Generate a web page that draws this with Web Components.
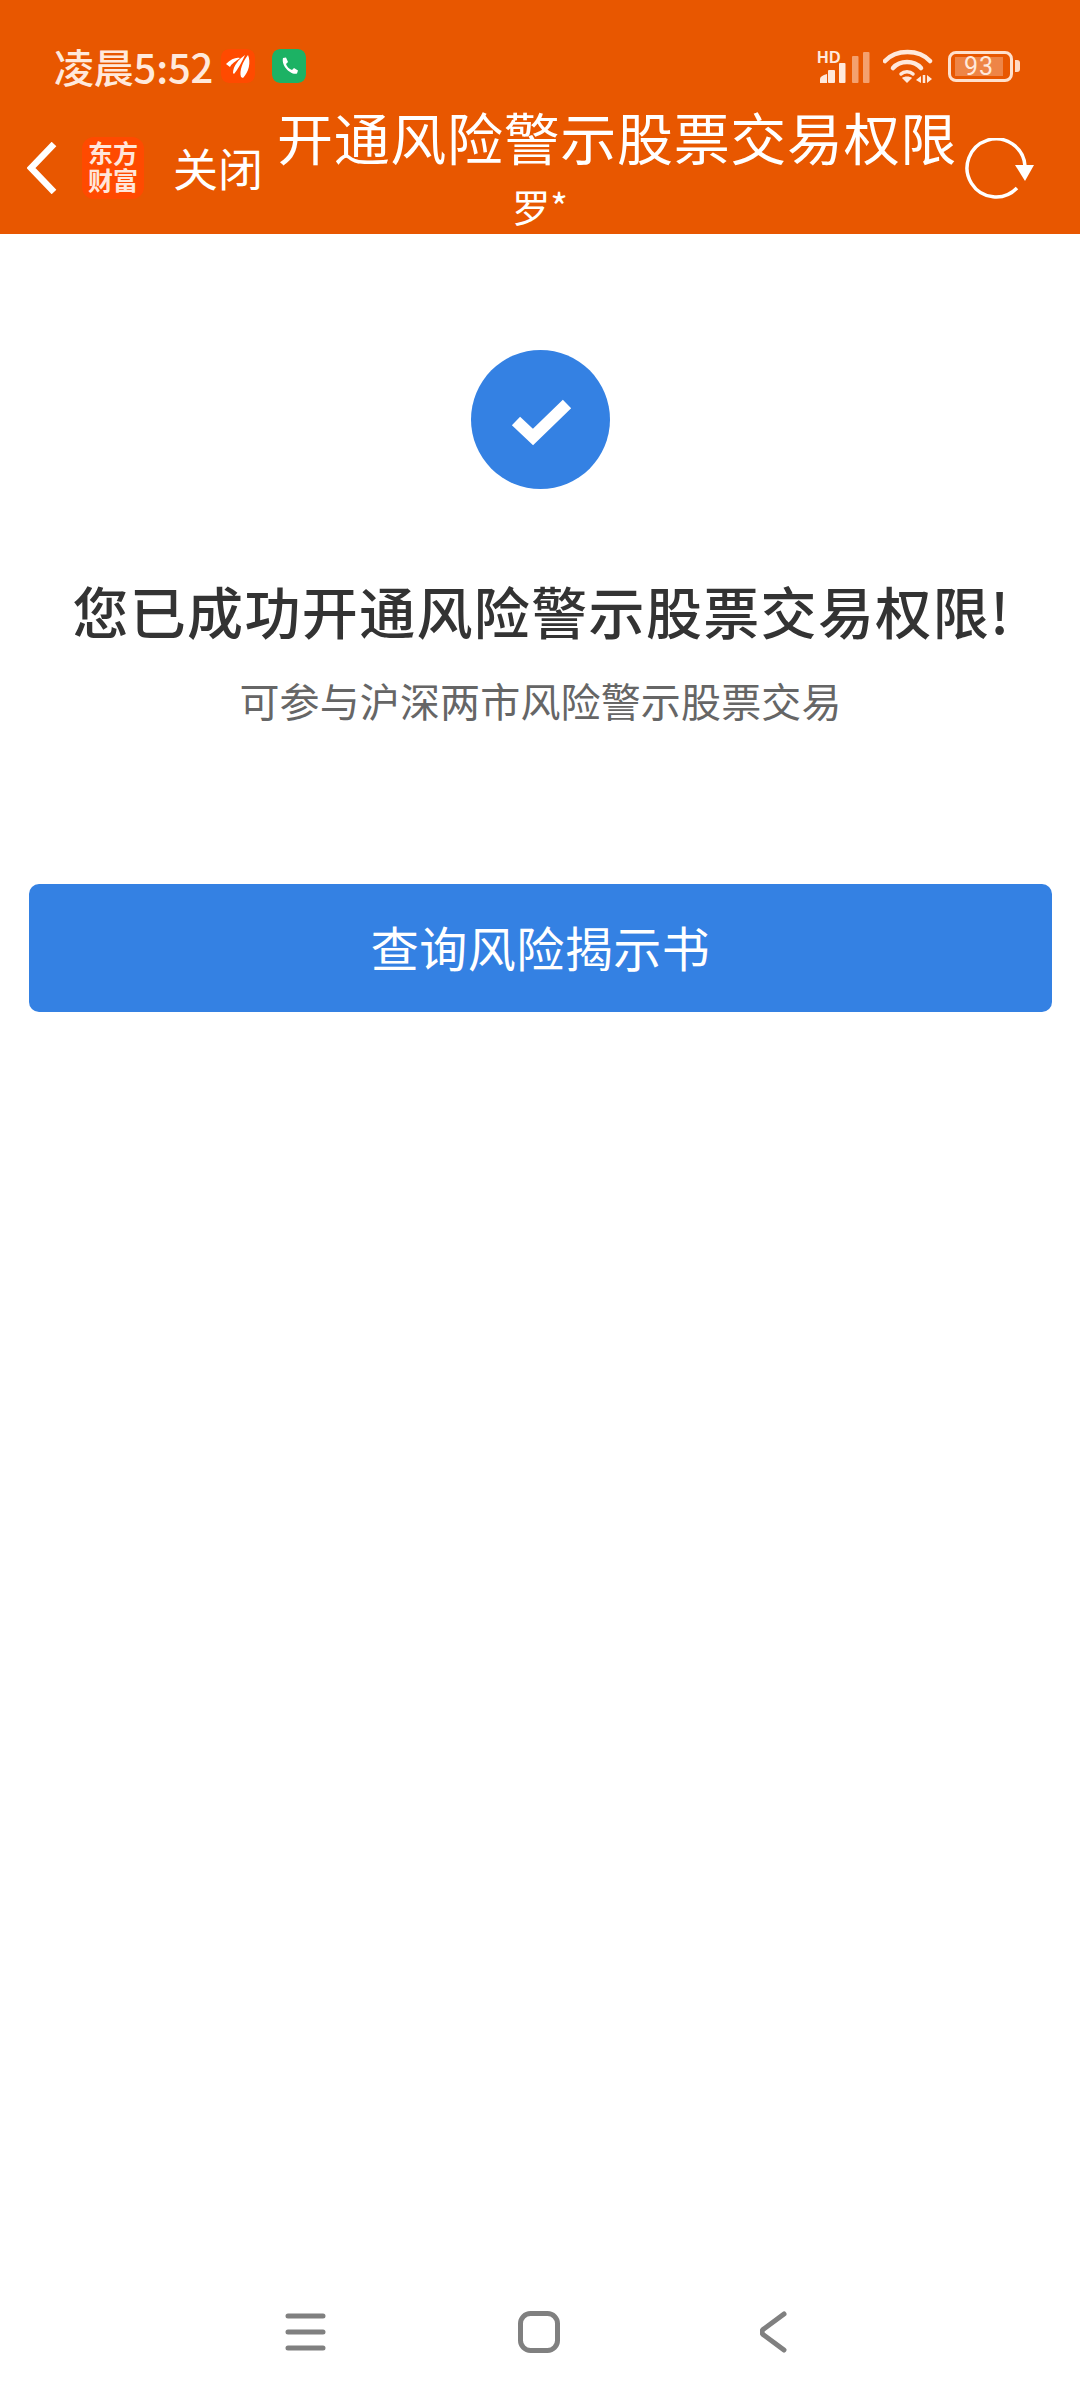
<!DOCTYPE html>
<html lang="zh">
<head>
<meta charset="utf-8">
<title>开通风险警示股票交易权限</title>
<style>
  html, body { margin: 0; padding: 0; background: #fff; }
  body {
    width: 1080px;
    height: 2400px;
    display: flex;
    flex-direction: column;
    font-family: "Noto Sans CJK SC", "Noto Sans", sans-serif;
  }
  result-panel { flex: 1; }
</style>
</head>
<body>
<status-bar time="凌晨5:52" battery="93"></status-bar>
<app-toolbar heading="开通风险警示股票交易权限" user="罗*" close-label="关闭"></app-toolbar>
<result-panel>
  <span slot="heading">您已成功开通风险警示股票交易权限!</span>
  <span slot="detail">可参与沪深两市风险警示股票交易</span>
  <action-button>查询风险揭示书</action-button>
</result-panel>
<nav-bar></nav-bar>

<script>
// status-bar - clock, notification icons, signal, wifi and battery
class StatusBar extends HTMLElement {
  constructor() {
    super();
    this.attachShadow({ mode: 'open' });
  }

  connectedCallback() {
    const time = this.getAttribute('time');
    const battery = this.getAttribute('battery');
    this.shadowRoot.innerHTML = `
      <style>
        :host {
          display: flex;
          align-items: center;
          height: 34px;
          padding: 49px 60px 13px 54px;
          background: #e85700;
          color: #ffe9dc;
        }
        .time { font-size: 40px; font-weight: 500; line-height: 34px; white-space: nowrap; width: 167px; letter-spacing: -0.2px; }
        .app { width: 34px; height: 34px; border-radius: 8px; display: block; }
        .app + .app { margin-left: 17px; }
        .spacer { flex: 1; }
        .signal { position: relative; width: 56px; height: 34px; margin-right: 10px; }
        .hd {
          position: absolute; left: 0; top: 2px;
          font: 700 16px/13px "Liberation Sans", sans-serif;
          letter-spacing: 0.5px;
        }
        svg { display: block; }
        .battery {
          box-sizing: border-box;
          display: flex;
          align-items: center;
          justify-content: center;
          width: 65px;
          height: 31px;
          margin-left: 15px;
          padding: 3px 7px 3px 4px;
          border: 3px solid #ffe0cc;
          border-radius: 8px;
        }
        .level {
          flex: 1;
          height: 100%;
          background: rgba(255, 255, 255, 0.28);
          text-align: center;
          font: 400 25px/19px "Roboto", sans-serif;
          letter-spacing: 1px;
        }
        .tip { width: 5px; height: 12px; margin-left: 2px; border-radius: 0 3px 3px 0; background: #ffd9c2; }
      </style>
      <span class="time">${time}</span>
      <svg class="app" viewBox="0 0 34 34">
        <rect width="34" height="34" rx="8" fill="#ff4a00"/>
        <path d="M5 15 C10 10 15 8 19 9 C15 12 10 15 9 18 Z M12 24 C12 17 18 10 24 6 C21 13 17 20 13 25 Z M20 28 C18 22 22 12 27 6 C30 13 28 23 22 29 Z" fill="#fff"/>
      </svg>
      <svg class="app" viewBox="0 0 34 34">
        <rect width="34" height="34" rx="8" fill="#1cb264"/>
        <path d="M11 9 L14 8.5 L16 13 L14 15 C15 18 17 20 20 21 L22 19 L26 21.5 L25 24.5 C19 26.5 9 17 11 9 Z" fill="#fff"/>
      </svg>
      <span class="spacer"></span>
      <span class="signal">
        <span class="hd">HD</span>
        <svg width="56" height="34" viewBox="0 0 56 34" fill="#ffe9dc">
          <path d="M3 34 V30 Q3 27 10 25 V34 Z"/>
          <rect x="11" y="21" width="7" height="13" rx="1"/>
          <rect x="22" y="14" width="6.5" height="20" rx="1"/>
          <rect x="35" y="7" width="6.5" height="27" rx="1" opacity=".5"/>
          <rect x="46" y="3" width="6.5" height="31" rx="1" opacity=".5"/>
        </svg>
      </span>
      <svg width="50" height="36" viewBox="0 0 50 36" fill="none" stroke="#ffe9dc" stroke-width="4.5" stroke-linecap="round">
        <path d="M2 13 C13 1 36 1 47 13"/>
        <path d="M10 20 C17 12 31 12 38 20"/>
        <path d="M18 26 C21 23 27 23 30 26" stroke-width="3.5"/>
        <path d="M19 30 L24 35 L29 30 C27 28 21 28 19 30 Z" fill="#ffe9dc" stroke="none"/>
        <path d="M38 28 L33 32 L38 35 Z M44 27 V35 L49 31 Z" fill="#ffe9dc" stroke="none"/>
        <path d="M41 27 V35" stroke-width="2.5" stroke-linecap="butt"/>
      </svg>
      <span class="battery"><span class="level">${battery}</span></span>
      <span class="tip"></span>
    `;
  }
}

// app-toolbar - back, brand, close, title with account line, reload
class AppToolbar extends HTMLElement {
  constructor() {
    super();
    this.attachShadow({ mode: 'open' });
  }

  connectedCallback() {
    this.shadowRoot.innerHTML = `
      <style>
        :host {
          display: grid;
          grid-template-columns: 277px 680px 1fr;
          grid-template-rows: 70px 68px;
          background: #e85700;
          color: #fff;
        }
        .left {
          grid-column: 1;
          grid-row: 1 / 3;
          display: flex;
          align-items: center;
          padding: 6px 0 0 27px;
        }
        .logo {
          box-sizing: border-box;
          width: 62px;
          height: 62px;
          margin-left: 25px;
          padding: 2px 6px 0;
          border-radius: 12px;
          background: #ff4a00;
          color: #ffe6da;
          font-size: 25px;
          font-weight: 700;
          line-height: 27px;
          text-align: center;
          overflow-wrap: anywhere;
        }
        .close { margin-left: 29px; font-size: 45px; line-height: 50px; white-space: nowrap; }
        .title {
          grid-column: 2;
          grid-row: 1;
          align-self: end;
          font-size: 56px;
          letter-spacing: 0.67px;
          line-height: 60px;
          white-space: nowrap;
        }
        .user {
          grid-column: 1 / -1;
          grid-row: 2;
          justify-self: center;
          font-size: 38px;
          line-height: 40px;
          margin-top: 20px;
        }
        .reload {
          grid-column: 3;
          grid-row: 1 / 3;
          align-self: center;
          margin: 8px 0 0 6px;
          display: block;
        }
      </style>
      <div class="left">
        <svg width="30" height="52" viewBox="0 0 30 52" fill="none" stroke="#fff" stroke-width="6.5">
          <path d="M27 2 L4 26 L27 50"/>
        </svg>
        <div class="logo">东方财富</div>
        <span class="close">${this.getAttribute('close-label')}</span>
      </div>
      <div class="title">${this.getAttribute('heading')}</div>
      <div class="user">${this.getAttribute('user')}</div>
      <svg class="reload" width="72" height="62" viewBox="0 0 72 62" fill="none">
        <path d="M54 50 A29 29 0 1 1 62 28" stroke="#fff" stroke-width="3.5"/>
        <path d="M52 27 H71 L62 43 Z" fill="#fff"/>
      </svg>
    `;
  }
}

// result-panel - success mark, headline and detail, actions below
class ResultPanel extends HTMLElement {
  constructor() {
    super();
    this.attachShadow({ mode: 'open' });
  }

  connectedCallback() {
    this.shadowRoot.innerHTML = `
      <style>
        :host {
          display: flex;
          flex-direction: column;
          align-items: center;
          padding: 116px 28px 0 29px;
          background: #fff;
        }
        .mark { display: block; }
        .heading {
          margin: 86px 0 0 2px;
          font-size: 56px;
          font-weight: 500;
          line-height: 70px;
          letter-spacing: 1.35px;
          color: #333;
          white-space: nowrap;
        }
        .detail {
          margin-top: 28px;
          font-size: 40px;
          line-height: 54px;
          letter-spacing: 0.15px;
          color: #666;
          white-space: nowrap;
        }
        .actions { align-self: stretch; margin-top: 157px; }
      </style>
      <svg class="mark" width="139" height="139" viewBox="0 0 139 139">
        <circle cx="69.5" cy="69.5" r="69.5" fill="#3481e3"/>
        <path d="M45 71 L62 87 L96 54" fill="none" stroke="#fff" stroke-width="12"/>
      </svg>
      <div class="heading"><slot name="heading"></slot></div>
      <div class="detail"><slot name="detail"></slot></div>
      <div class="actions"><slot></slot></div>
    `;
  }
}

// action-button - full width primary button
class ActionButton extends HTMLElement {
  constructor() {
    super();
    this.attachShadow({ mode: 'open' });
  }

  connectedCallback() {
    this.shadowRoot.innerHTML = `
      <style>
        :host { display: block; }
        button {
          display: block;
          width: 100%;
          height: 128px;
          padding: 0 0 4px;
          border: none;
          border-radius: 10px;
          background: #3481e3;
          color: #fff;
          font-family: inherit;
          font-size: 48px;
          letter-spacing: 0.5px;
        }
      </style>
      <button type="button"><slot></slot></button>
    `;
  }
}

// nav-bar - system navigation keys
class NavBar extends HTMLElement {
  constructor() {
    super();
    this.attachShadow({ mode: 'open' });
  }

  connectedCallback() {
    this.shadowRoot.innerHTML = `
      <style>
        :host {
          display: flex;
          align-items: center;
          height: 42px;
          padding: 0 0 47px 285px;
          background: #fff;
        }
        svg { display: block; }
        .home { margin-left: 192px; }
        .back { margin-left: 200px; }
      </style>
      <svg width="41" height="38" viewBox="0 0 41 38" stroke="#808080" stroke-width="5" stroke-linecap="round">
        <path d="M3 3 H38 M3 19 H38 M3 35 H38"/>
      </svg>
      <svg class="home" width="42" height="42" viewBox="0 0 42 42" fill="none" stroke="#808080" stroke-width="5">
        <rect x="2.5" y="2.5" width="37" height="37" rx="10"/>
      </svg>
      <svg class="back" width="27" height="42" viewBox="0 0 27 42" fill="none" stroke="#808080" stroke-width="5" stroke-linecap="round" stroke-linejoin="round">
        <path d="M24 3 L3 18.5 Q1 21 3 23.5 L24 39"/>
      </svg>
    `;
  }
}

customElements.define('status-bar', StatusBar);
customElements.define('app-toolbar', AppToolbar);
customElements.define('result-panel', ResultPanel);
customElements.define('action-button', ActionButton);
customElements.define('nav-bar', NavBar);
</script>
</body>
</html>
